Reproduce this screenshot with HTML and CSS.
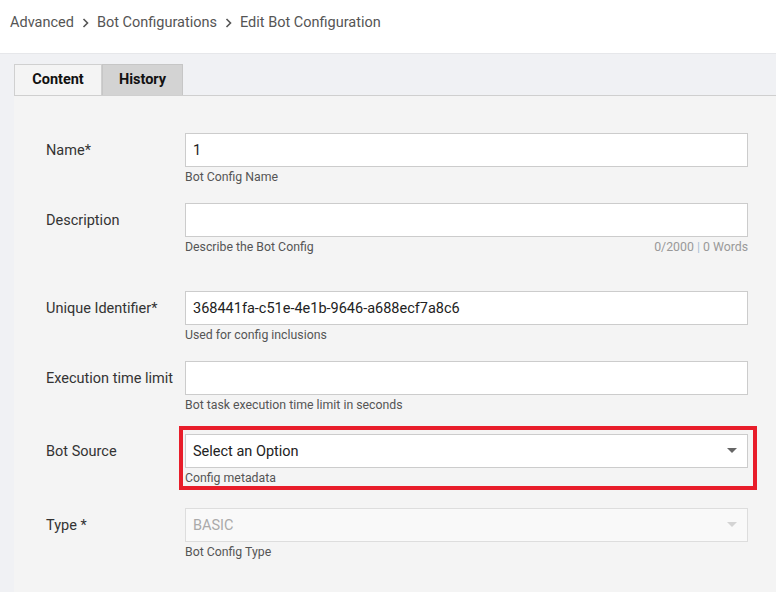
FILE: index.html
```html
<!DOCTYPE html>
<html lang="en">
<head>
  <meta charset="UTF-8" />
  <meta name="viewport" content="width=device-width, initial-scale=1.0"/>
  <title>Edit Bot Configuration</title>
  <link rel="stylesheet" href="styles.css">
</head>
<body>

  <div class="page-header">
    <nav class="breadcrumb">
      <a href="#">Advanced</a>
      <svg class="crumb-sep" width="7" height="10" viewBox="0 0 7 10"><polyline points="1.5,1 5.5,5 1.5,9" fill="none" stroke="#555" stroke-width="1.6"/></svg>
      <a href="#">Bot Configurations</a>
      <svg class="crumb-sep" width="7" height="10" viewBox="0 0 7 10"><polyline points="1.5,1 5.5,5 1.5,9" fill="none" stroke="#555" stroke-width="1.6"/></svg>
      <span>Edit Bot Configuration</span>
    </nav>
  </div>

  <div class="page-body">
    <div class="tabs">
      <div class="tab active">Content</div>
      <div class="tab">History</div>
    </div>

    <div class="panel">
      <div class="form-row">
        <label class="form-label" for="name">Name*</label>
        <div class="form-field">
          <input type="text" id="name" value="1">
          <div class="help">Bot Config Name</div>
        </div>
      </div>

      <div class="form-row spaced">
        <label class="form-label" for="description">Description</label>
        <div class="form-field">
          <input type="text" id="description">
          <div class="help split">
            <span>Describe the Bot Config</span>
            <span class="counter">0/2000 <span class="pipe">|</span> 0 Words</span>
          </div>
        </div>
      </div>

      <div class="form-row">
        <label class="form-label" for="uid">Unique Identifier*</label>
        <div class="form-field">
          <input type="text" id="uid" value="368441fa-c51e-4e1b-9646-a688ecf7a8c6">
          <div class="help">Used for config inclusions</div>
        </div>
      </div>

      <div class="form-row">
        <label class="form-label" for="timelimit">Execution time limit</label>
        <div class="form-field">
          <input type="text" id="timelimit">
          <div class="help">Bot task execution time limit in seconds</div>
        </div>
      </div>

      <div class="form-row flagged">
        <label class="form-label" for="source">Bot Source</label>
        <div class="form-field">
          <div class="flag-box">
            <div class="select-wrap">
              <select id="source">
                <option>Select an Option</option>
              </select>
              <svg class="caret" width="10" height="5" viewBox="0 0 10 5"><polygon points="0,0 10,0 5,5" fill="#666"/></svg>
            </div>
            <div class="help">Config metadata</div>
          </div>
        </div>
      </div>

      <div class="form-row">
        <label class="form-label" for="type">Type *</label>
        <div class="form-field">
          <div class="select-wrap">
            <select id="type" disabled>
              <option>BASIC</option>
            </select>
            <svg class="caret" width="10" height="5" viewBox="0 0 10 5"><polygon points="0,0 10,0 5,5" fill="#d4d4d4"/></svg>
          </div>
          <div class="help">Bot Config Type</div>
        </div>
      </div>
    </div>
  </div>

</body>
</html>
```

FILE: styles.css
```css
* {
  box-sizing: border-box;
  font-family: Roboto, "Liberation Sans", Arial, sans-serif;
}
body {
  margin: 0;
  background-color: #f0f1f4;
  color: #333;
}
.page-header {
  height: 54px;
  background: #ffffff;
  border-bottom: 1px solid #e6e7ea;
  padding: 14px 10px 0;
}
.breadcrumb {
  display: flex;
  align-items: center;
  font-size: 14.5px;
  line-height: 18px;
  color: #555;
}
.breadcrumb a {
  color: #555;
  text-decoration: none;
}
.crumb-sep {
  margin: 0 8px 0 8px;
}
.page-body {
  padding: 10px 0 0 14px;
}
.tabs {
  display: flex;
}
.tab {
  height: 31px;
  line-height: 29px;
  font-size: 14.5px;
  font-weight: bold;
  text-align: center;
  color: #111;
  background: #d3d3d3;
  border: 1px solid #c6c6c6;
  border-bottom: none;
}
.tab.active {
  width: 88px;
  background: #f4f4f4;
  border-color: #d0d0d0;
  margin-bottom: -1px;
  position: relative;
}
.tab + .tab {
  width: 81px;
}
.panel {
  background: #f4f4f4;
  border-top: 1px solid #cfcfcf;
  padding: 37px 28px 40px 32px;
  min-height: 498px;
}
.form-row {
  display: flex;
  margin-bottom: 18px;
}
.form-row.spaced {
  margin-bottom: 36px;
}
.form-row.flagged {
  margin-top: 21px;
}
.form-label {
  width: 139px;
  flex-shrink: 0;
  padding-top: 1px;
  font-size: 14.5px;
  line-height: 34px;
  color: #333;
}
.form-field {
  flex: 1;
}
input[type="text"], select {
  display: block;
  width: 100%;
  height: 34px;
  padding: 0 7px;
  border: 1px solid #cccccc;
  border-radius: 0;
  background: #ffffff;
  font-size: 14.5px;
  color: #222;
  outline: none;
}
select {
  appearance: none;
  -webkit-appearance: none;
}
select:disabled {
  background: #f9f9f9;
  border-color: #dddddd;
  color: #aaaaaa;
  opacity: 1;
}
.select-wrap {
  position: relative;
}
.caret {
  position: absolute;
  right: 11px;
  top: 14px;
}
.help {
  margin-top: 2px;
  font-size: 12.3px;
  line-height: 16px;
  color: #555;
}
.help.split {
  display: flex;
  justify-content: space-between;
}
.counter {
  color: #999;
}
.counter .pipe {
  color: #a9bfd6;
}
.flag-box {
  margin: -8px -9px 0 -6px;
  padding: 4px 5px 0 2px;
  border: 4px solid #e81d2a;
}
```
